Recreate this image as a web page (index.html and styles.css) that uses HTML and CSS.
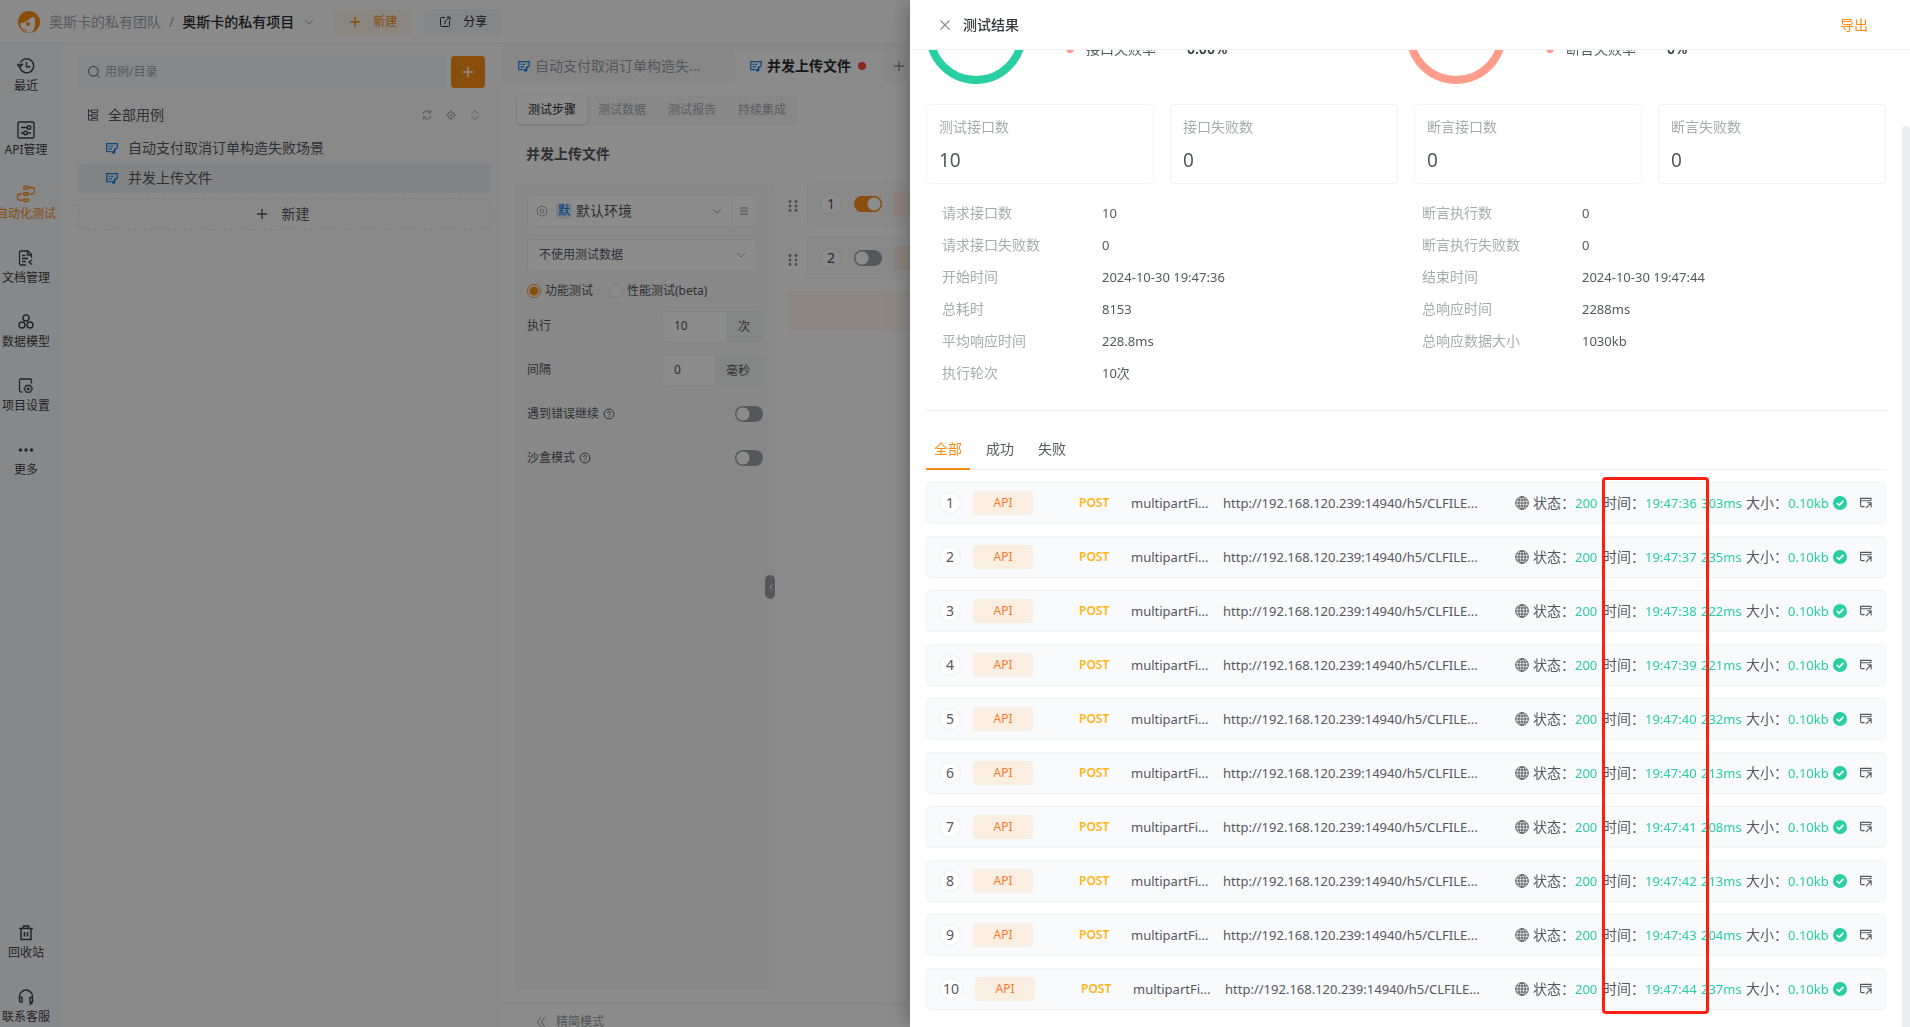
FILE: index.html
```html
<!DOCTYPE html>
<html lang="zh-CN">
<head>
<meta charset="utf-8">
<title>测试结果</title>
<link rel="stylesheet" href="styles.css">
</head>
<body>
<svg class="sprite" aria-hidden="true">
  <symbol id="i-case" viewBox="0 0 12 12"><path d="M5.500 9.600H1.200a.5.5 0 0 1-.5-.5V1.700h10.600V5" fill="none" stroke="currentColor" stroke-width="1.300"/><path d="M2.600 4.400h1.200M4.800 4.400h2.400M2.600 6.900h3.400" stroke="currentColor" stroke-width="1.200"/><path d="M11.300 5.200c0 1.300-1 1.900-2.600 1.900V10" fill="none" stroke="currentColor" stroke-width="1.500"/><circle cx="7.600" cy="10.200" r="1.600" fill="currentColor"/></symbol>
  <symbol id="i-down" viewBox="0 0 12 12"><path d="m2 4 4 4 4-4" fill="none" stroke="currentColor"/></symbol>
  <symbol id="i-plus" viewBox="0 0 12 12"><path d="M6 1v10M1 6h10" fill="none" stroke="currentColor" stroke-width="1.400"/></symbol>
  <symbol id="i-help" viewBox="0 0 12 12"><circle cx="6" cy="6" r="4.900" fill="none" stroke="currentColor"/><path d="M4.600 5a1.400 1.400 0 1 1 2 1.200c-.5.3-.6.4-.6 1M6 7.900v.9" fill="none" stroke="currentColor"/></symbol>
  <symbol id="i-globe" viewBox="0 0 14 14"><g fill="none" stroke="currentColor"><circle cx="7" cy="7" r="6.300"/><ellipse cx="7" cy="7" rx="3.200" ry="6.300"/><path d="M7 .7v12.600M.7 7h12.600M1.600 4h10.800M1.600 10h10.800"/></g></symbol>
  <symbol id="i-ok" viewBox="0 0 14 14"><circle cx="7" cy="7" r="7" fill="#28cfa2"/><path d="m3.800 7 2.400 2.400 4.200-4.500" fill="none" stroke="#fff" stroke-width="1.700"/></symbol>
  <symbol id="i-open" viewBox="0 0 12 12"><g fill="none" stroke="currentColor" stroke-width="1.100"><path d="M4.500 9.600H1.600a1 1 0 0 1-1-1V1.400h10.400v2.200M.6 3.700h10.400M6 11.200l5-5.400M7.300 5.700h3.800v4.800"/></g></symbol>
  <symbol id="i-dots" viewBox="0 0 10 12"><g fill="currentColor"><circle cx="2" cy="1.500" r="1.400"/><circle cx="8" cy="1.500" r="1.400"/><circle cx="2" cy="6" r="1.400"/><circle cx="8" cy="6" r="1.400"/><circle cx="2" cy="10.500" r="1.400"/><circle cx="8" cy="10.500" r="1.400"/></g></symbol>
</svg>

<div class="app">
  <header class="topbar">
    <svg class="logo" viewBox="0 0 22 22"><circle cx="11" cy="11" r="11" fill="#fa8c16"/><path d="M2 12.500C6.500 12 11 9 14.500 5.800c1.500 0 2.500.8 2.500 2.200 0 4 .3 8-1.500 11.500L13 21.500H7.500L3.500 18z" fill="#fff"/><circle cx="10" cy="13" r="2" fill="#fa8c16"/><path d="m3.500 16.500 3.500 5M6.500 17.500l2.500 4" stroke="#fa8c16"/></svg>
    <nav class="crumbs"><a href="#" class="muted">奥斯卡的私有团队</a><span class="muted">/</span><a href="#" class="project">奥斯卡的私有项目</a></nav>
    <svg class="icon12 muted"><use href="#i-down"/></svg>
    <div class="top-actions">
      <button class="btn btn-new"><svg class="icon12"><use href="#i-plus"/></svg>新建</button>
      <button class="btn btn-share"><svg class="icon12" viewBox="0 0 12 12"><path d="M6 1.500H2.500a1 1 0 0 0-1 1v7a1 1 0 0 0 1 1h7a1 1 0 0 0 1-1V5M6 8c0-3 1-5 4.500-6M8 1h3v3" fill="none" stroke="currentColor"/></svg>分享</button>
    </div>
  </header>

  <div class="body">
    <nav class="rail">
      <a href="#"><svg viewBox="0 0 18 18"><path d="M3.500 5.500a7 7 0 1 1-.6 5M.5 7.500h4.800L2.800 10.500zM9.500 5v4.800h4" fill="none" stroke="currentColor" stroke-width="1.400"/></svg>最近</a>
      <a href="#"><svg viewBox="0 0 18 18"><g fill="none" stroke="currentColor" stroke-width="1.400"><rect x="1" y="1" width="16" height="16" rx="1.500"/><path d="M4 6.500h6M4 12h2.500M10.500 12H14"/><circle cx="12" cy="6.500" r="1.800"/><circle cx="8.500" cy="12" r="1.800"/></g></svg>API管理</a>
      <a href="#" class="on"><svg viewBox="0 0 18 18"><g fill="none" stroke="currentColor" stroke-width="1.400"><rect x="6.500" y="1.500" width="5" height="2.600" rx="1.300"/><rect x="6.500" y="7.700" width="5" height="2.600" rx="1.300"/><rect x="6.500" y="13.900" width="5" height="2.600" rx="1.300"/><path d="M12 2.500h2.500a3 3 0 0 1 0 6.500H13M5 9H3.700a3 3 0 0 0-.7 6.200h2"/></g></svg>自动化测试</a>
      <a href="#"><svg viewBox="0 0 18 18"><g fill="none" stroke="currentColor" stroke-width="1.300"><path d="M9 16H4a1.500 1.500 0 0 1-1.500-1.500v-11A1.500 1.500 0 0 1 4 2h7l3.500 3.500V9M10.500 2v4h4M5 6.500h3.500M5 9.500h6M5 12.500h4M15 11l-3 2 3 2.500"/></g></svg>文档管理</a>
      <a href="#"><svg viewBox="0 0 18 18"><g fill="none" stroke="currentColor" stroke-width="1.400"><circle cx="9" cy="5" r="3"/><circle cx="5" cy="12" r="3"/><circle cx="13" cy="12" r="3"/></g></svg>数据模型</a>
      <a href="#"><svg viewBox="0 0 18 18"><g fill="none" stroke="currentColor" stroke-width="1.300"><path d="M5.500 15H4a1.500 1.500 0 0 1-1.500-1.500v-10A1.500 1.500 0 0 1 4 2h9.500a1 1 0 0 1 1 1v3.500"/><path d="m9.300 8.500h4l2 3.300-2 3.400h-4l-2-3.400z"/><circle cx="11.300" cy="11.900" r=".8"/></g></svg>项目设置</a>
      <a href="#"><svg viewBox="0 0 18 18"><g fill="currentColor"><circle cx="3.500" cy="9" r="1.700"/><circle cx="9" cy="9" r="1.700"/><circle cx="14.500" cy="9" r="1.700"/></g></svg>更多</a>
      <a href="#" class="push"><svg viewBox="0 0 18 18"><path d="M2 4.500h14M6.500 4V2h5v2M4 5v10.500h10V5M7.500 8v4.500M10.500 8v4.500" fill="none" stroke="currentColor" stroke-width="1.500"/></svg>回收站</a>
      <a href="#"><svg viewBox="0 0 18 18"><path d="M2.500 13V8.500a6.500 6.500 0 0 1 13 0V13c0 2-1 3-3 3.500M2.500 9.500h2.500V14H3.500a1 1 0 0 1-1-1zM15.500 9.500H13V14h2.500" fill="none" stroke="currentColor" stroke-width="1.400"/></svg>联系客服</a>
    </nav>

    <aside class="cases">
      <div class="search-row">
        <label class="search"><svg viewBox="0 0 12 12"><circle cx="5.300" cy="5.300" r="4.800" fill="none" stroke="currentColor"/><path d="m8.600 8.600 3 3" stroke="currentColor"/></svg><input type="text" placeholder="用例/目录" aria-label="用例/目录"></label>
        <button class="add" aria-label="新建"><svg class="icon12"><use href="#i-plus"/></svg></button>
      </div>
      <div class="tree-head">
        <svg class="icon12" viewBox="0 0 12 12"><path d="M1.500 0v11h3M1.500 2h3M1.500 6.500h3M4.500 1h6v2.500h-6zM4.500 5.300h6v2.500h-6zM4.500 9.500h6V12h-6z" fill="none" stroke="currentColor"/></svg>
        <span class="grow">全部用例</span>
        <svg class="icon10" viewBox="0 0 10 10"><path d="M1 4a4 4 0 0 1 7.500-1V.5M9 6a4 4 0 0 1-7.500 1v2.500M8.500 3H6M1.500 7H4" fill="none" stroke="currentColor"/></svg>
        <svg class="icon10" viewBox="0 0 10 10"><path d="M5 0v2M5 8v2M0 5h2M8 5h2" stroke="currentColor"/><circle cx="5" cy="5" r="3.200" fill="none" stroke="currentColor"/><circle cx="5" cy="5" r="1" fill="currentColor"/></svg>
        <svg class="icon10" viewBox="0 0 10 10"><path d="m2 3.500 3-3 3 3M2 6.500l3 3 3-3" fill="none" stroke="currentColor"/></svg>
      </div>
      <a href="#" class="leaf"><svg class="icon12"><use href="#i-case"/></svg>自动支付取消订单构造失败场景</a>
      <a href="#" class="leaf selected"><svg class="icon12"><use href="#i-case"/></svg>并发上传文件</a>
      <button class="new-case"><svg class="icon12"><use href="#i-plus"/></svg>新建</button>
    </aside>

    <main class="main">
      <div class="tabs">
        <a href="#" class="tab"><svg class="icon12 blue"><use href="#i-case"/></svg>自动支付取消订单构造失...</a>
        <a href="#" class="tab current"><svg class="icon12 blue"><use href="#i-case"/></svg>并发上传文件<i class="dirty"></i></a>
        <button class="tab-add" aria-label="新标签"><svg class="icon12"><use href="#i-plus"/></svg></button>
      </div>
      <div class="page">
        <div class="segments"><button class="on">测试步骤</button><button>测试数据</button><button>测试报告</button><button>持续集成</button></div>
        <h1>并发上传文件</h1>
        <div class="work">
          <section class="config">
            <div class="field env">
              <svg class="icon12 muted" viewBox="0 0 12 12"><path d="m6 .7 4.600 2.600v5.400L6 11.300 1.400 8.700V3.300z" fill="none" stroke="currentColor"/><circle cx="6" cy="6" r="1.800" fill="none" stroke="currentColor"/></svg>
              <b>默</b><span class="grow">默认环境</span>
              <svg class="icon12 muted"><use href="#i-down"/></svg>
              <button aria-label="环境管理"><svg class="icon12" viewBox="0 0 12 12"><path d="M2 3h8M2 6h8M2 9h8" stroke="currentColor"/></svg></button>
            </div>
            <div class="field"><select aria-label="测试数据"><option>不使用测试数据</option></select><svg class="icon12 muted caret"><use href="#i-down"/></svg></div>
            <div class="radios">
              <label><input type="radio" name="kind" checked>功能测试</label>
              <label><input type="radio" name="kind">性能测试(beta)</label>
            </div>
            <div class="line"><label for="times">执行</label><span class="num"><input id="times" type="text" value="10"><em>次</em></span></div>
            <div class="line"><label for="gap">间隔</label><span class="num"><input id="gap" type="text" value="0"><em>毫秒</em></span></div>
            <div class="line"><label for="cont">遇到错误继续</label><svg class="icon12"><use href="#i-help"/></svg><input id="cont" type="checkbox" class="switch"></div>
            <div class="line"><label for="box">沙盒模式</label><svg class="icon12"><use href="#i-help"/></svg><input id="box" type="checkbox" class="switch"></div>
            <button class="fold" aria-label="收起"><svg viewBox="0 0 8 8"><path d="M5.500 1.500 3 4l2.500 2.500" fill="none" stroke="#fff"/></svg></button>
          </section>
          <section class="steps">
            <div class="step"><svg><use href="#i-dots"/></svg><div class="step-card"><span class="badge">1</span><input type="checkbox" class="switch" aria-label="启用步骤 1" checked><span class="step-tag"></span></div></div>
            <div class="step"><svg><use href="#i-dots"/></svg><div class="step-card"><span class="badge">2</span><input type="checkbox" class="switch" aria-label="启用步骤 2"><span class="step-tag"></span></div></div>
            <div class="step-add"></div>
          </section>
        </div>
      </div>
      <footer class="foot"><svg class="icon12" viewBox="0 0 12 12"><path d="M6 1 2.500 6 6 11M10 1 6.500 6l3.500 5" fill="none" stroke="currentColor"/></svg>精简模式</footer>
    </main>
  </div>
</div>

<div class="mask"></div>

<section class="drawer" role="dialog" aria-labelledby="drawer-title">
  <header class="drawer-head">
    <button class="close" aria-label="关闭"><svg class="icon12" viewBox="0 0 12 12"><path d="m1.500 1.500 9 9M10.500 1.500l-9 9" stroke="currentColor" stroke-width="1.200"/></svg></button>
    <h2 id="drawer-title">测试结果</h2>
    <a href="#" class="export">导出</a>
  </header>
  <div class="drawer-body">
    <div class="rates">
      <div class="rate"><svg class="ring" viewBox="0 0 100 100"><circle cx="50" cy="50" r="46" fill="none" stroke="#28cfa2" stroke-width="8"/></svg><p><i></i><span>接口失败率</span><strong>0.00%</strong></p></div>
      <div class="rate"><svg class="ring" viewBox="0 0 100 100"><circle cx="50" cy="50" r="46" fill="none" stroke="#ff9c8c" stroke-width="8"/></svg><p><i></i><span>断言失败率</span><strong>0%</strong></p></div>
    </div>
    <div class="cards">
      <div class="card"><span>测试接口数</span><b>10</b></div>
      <div class="card"><span>接口失败数</span><b>0</b></div>
      <div class="card"><span>断言接口数</span><b>0</b></div>
      <div class="card"><span>断言失败数</span><b>0</b></div>
    </div>
    <dl class="facts">
      <dt>请求接口数</dt><dd>10</dd><dt>断言执行数</dt><dd>0</dd>
      <dt>请求接口失败数</dt><dd>0</dd><dt>断言执行失败数</dt><dd>0</dd>
      <dt>开始时间</dt><dd>2024-10-30 19:47:36</dd><dt>结束时间</dt><dd>2024-10-30 19:47:44</dd>
      <dt>总耗时</dt><dd>8153</dd><dt>总响应时间</dt><dd>2288ms</dd>
      <dt>平均响应时间</dt><dd>228.8ms</dd><dt>总响应数据大小</dt><dd>1030kb</dd>
      <dt>执行轮次</dt><dd>10次</dd>
    </dl>
    <nav class="filters"><a href="#" class="on">全部</a><a href="#">成功</a><a href="#">失败</a></nav>
    <div class="results">
      <div class="row"><span class="badge">1</span><span class="api">API</span><span class="verb">POST</span><span class="name">multipartFi...</span><span class="url">http://192.168.120.239:14940/h5/CLFILE...</span><svg class="icon14"><use href="#i-globe"/></svg><span class="lab">状态：</span><span class="code">200</span><span class="lab">时间：</span><span class="time">19:47:36</span><span class="ms">303ms</span><span class="lab">大小：</span><span class="size">0.10kb</span><svg class="icon14"><use href="#i-ok"/></svg><button class="open" aria-label="详情"><svg class="icon12"><use href="#i-open"/></svg></button></div>
      <div class="row"><span class="badge">2</span><span class="api">API</span><span class="verb">POST</span><span class="name">multipartFi...</span><span class="url">http://192.168.120.239:14940/h5/CLFILE...</span><svg class="icon14"><use href="#i-globe"/></svg><span class="lab">状态：</span><span class="code">200</span><span class="lab">时间：</span><span class="time">19:47:37</span><span class="ms">235ms</span><span class="lab">大小：</span><span class="size">0.10kb</span><svg class="icon14"><use href="#i-ok"/></svg><button class="open" aria-label="详情"><svg class="icon12"><use href="#i-open"/></svg></button></div>
      <div class="row"><span class="badge">3</span><span class="api">API</span><span class="verb">POST</span><span class="name">multipartFi...</span><span class="url">http://192.168.120.239:14940/h5/CLFILE...</span><svg class="icon14"><use href="#i-globe"/></svg><span class="lab">状态：</span><span class="code">200</span><span class="lab">时间：</span><span class="time">19:47:38</span><span class="ms">222ms</span><span class="lab">大小：</span><span class="size">0.10kb</span><svg class="icon14"><use href="#i-ok"/></svg><button class="open" aria-label="详情"><svg class="icon12"><use href="#i-open"/></svg></button></div>
      <div class="row"><span class="badge">4</span><span class="api">API</span><span class="verb">POST</span><span class="name">multipartFi...</span><span class="url">http://192.168.120.239:14940/h5/CLFILE...</span><svg class="icon14"><use href="#i-globe"/></svg><span class="lab">状态：</span><span class="code">200</span><span class="lab">时间：</span><span class="time">19:47:39</span><span class="ms">221ms</span><span class="lab">大小：</span><span class="size">0.10kb</span><svg class="icon14"><use href="#i-ok"/></svg><button class="open" aria-label="详情"><svg class="icon12"><use href="#i-open"/></svg></button></div>
      <div class="row"><span class="badge">5</span><span class="api">API</span><span class="verb">POST</span><span class="name">multipartFi...</span><span class="url">http://192.168.120.239:14940/h5/CLFILE...</span><svg class="icon14"><use href="#i-globe"/></svg><span class="lab">状态：</span><span class="code">200</span><span class="lab">时间：</span><span class="time">19:47:40</span><span class="ms">232ms</span><span class="lab">大小：</span><span class="size">0.10kb</span><svg class="icon14"><use href="#i-ok"/></svg><button class="open" aria-label="详情"><svg class="icon12"><use href="#i-open"/></svg></button></div>
      <div class="row"><span class="badge">6</span><span class="api">API</span><span class="verb">POST</span><span class="name">multipartFi...</span><span class="url">http://192.168.120.239:14940/h5/CLFILE...</span><svg class="icon14"><use href="#i-globe"/></svg><span class="lab">状态：</span><span class="code">200</span><span class="lab">时间：</span><span class="time">19:47:40</span><span class="ms">213ms</span><span class="lab">大小：</span><span class="size">0.10kb</span><svg class="icon14"><use href="#i-ok"/></svg><button class="open" aria-label="详情"><svg class="icon12"><use href="#i-open"/></svg></button></div>
      <div class="row"><span class="badge">7</span><span class="api">API</span><span class="verb">POST</span><span class="name">multipartFi...</span><span class="url">http://192.168.120.239:14940/h5/CLFILE...</span><svg class="icon14"><use href="#i-globe"/></svg><span class="lab">状态：</span><span class="code">200</span><span class="lab">时间：</span><span class="time">19:47:41</span><span class="ms">208ms</span><span class="lab">大小：</span><span class="size">0.10kb</span><svg class="icon14"><use href="#i-ok"/></svg><button class="open" aria-label="详情"><svg class="icon12"><use href="#i-open"/></svg></button></div>
      <div class="row"><span class="badge">8</span><span class="api">API</span><span class="verb">POST</span><span class="name">multipartFi...</span><span class="url">http://192.168.120.239:14940/h5/CLFILE...</span><svg class="icon14"><use href="#i-globe"/></svg><span class="lab">状态：</span><span class="code">200</span><span class="lab">时间：</span><span class="time">19:47:42</span><span class="ms">213ms</span><span class="lab">大小：</span><span class="size">0.10kb</span><svg class="icon14"><use href="#i-ok"/></svg><button class="open" aria-label="详情"><svg class="icon12"><use href="#i-open"/></svg></button></div>
      <div class="row"><span class="badge">9</span><span class="api">API</span><span class="verb">POST</span><span class="name">multipartFi...</span><span class="url">http://192.168.120.239:14940/h5/CLFILE...</span><svg class="icon14"><use href="#i-globe"/></svg><span class="lab">状态：</span><span class="code">200</span><span class="lab">时间：</span><span class="time">19:47:43</span><span class="ms">204ms</span><span class="lab">大小：</span><span class="size">0.10kb</span><svg class="icon14"><use href="#i-ok"/></svg><button class="open" aria-label="详情"><svg class="icon12"><use href="#i-open"/></svg></button></div>
      <div class="row"><span class="badge">10</span><span class="api">API</span><span class="verb">POST</span><span class="name">multipartFi...</span><span class="url">http://192.168.120.239:14940/h5/CLFILE...</span><svg class="icon14"><use href="#i-globe"/></svg><span class="lab">状态：</span><span class="code">200</span><span class="lab">时间：</span><span class="time">19:47:44</span><span class="ms">237ms</span><span class="lab">大小：</span><span class="size">0.10kb</span><svg class="icon14"><use href="#i-ok"/></svg><button class="open" aria-label="详情"><svg class="icon12"><use href="#i-open"/></svg></button></div>
      <div class="highlight"></div>
    </div>
  </div>
  <div class="thumb"></div>
</section>
</body>
</html>
```
FILE: styles.css
```css
* { box-sizing: border-box; }
body {
  margin: 0;
  height: 100vh;
  overflow: hidden;
  font: 14px/22px "Noto Sans", "Noto Sans CJK SC", sans-serif;
  color: #55585d;
}
a { color: inherit; text-decoration: none; }
button, input, select { font: inherit; color: inherit; border: 0; padding: 0; margin: 0; background: none; }
h1, h2, p, dl, dd { margin: 0; }
svg { flex: none; }
.sprite { position: absolute; width: 0; height: 0; }
.icon10 { width: 10px; height: 10px; }
.icon12 { width: 12px; height: 12px; }
.icon14 { width: 14px; height: 14px; }
.grow { flex: 1; }
.muted { color: #a2a5a9; }
.blue { color: #1c84e8; }

/* application shell */
.app { height: 100vh; display: flex; flex-direction: column; background: #fff; }
.topbar { height: 44px; flex: none; display: flex; align-items: center; padding: 0 18px; border-bottom: 1px solid #eeeff1; background: #fcfcfc; }
.logo { width: 22px; height: 22px; margin-right: 9px; }
.crumbs { display: flex; gap: 8px; margin-right: 9px; }
.project { color: #2a2c30; font-weight: 500; }
.top-actions { display: flex; gap: 12px; margin-left: 19px; }
.btn { width: 78px; height: 26px; display: flex; align-items: center; justify-content: center; gap: 12px; border-radius: 4px; font-size: 12px; }
.btn-new { background: #fbf4ea; color: #fa8c16; }
.btn-share { background: #f2f4f7; color: #2a2c30; }
.body { flex: 1; min-height: 0; display: flex; }

.rail { width: 62px; flex: none; display: flex; flex-direction: column; padding-right: 10px; background: #f5f7fa; }
.rail a { height: 64px; flex: none; display: flex; flex-direction: column; align-items: center; padding-top: 13px; font-size: 12px; white-space: nowrap; color: #3f4246; }
.rail a.on { margin: 0 -10px; color: #fa8c16; }
.rail svg { width: 18px; height: 18px; }
.rail .push { margin-top: auto; }
.rail a:last-child { margin-bottom: -12px; }

.cases { width: 441px; flex: none; padding: 12px 12px 0 16px; background: #fafafa; }
.search-row { display: flex; gap: 4px; padding-right: 6px; }
.search { flex: 1; height: 32px; display: flex; align-items: center; gap: 5px; padding: 0 10px; border-radius: 4px; background: #f5f6f8; font-size: 12px; }
.search svg { width: 12px; height: 12px; }
.search input { flex: 1; outline: 0; }
.search input::placeholder { color: #a0a3a8; }
.add { width: 34px; height: 32px; border-radius: 4px; background: #fa8c16; color: #fff; display: grid; place-items: center; }
.tree-head { height: 45px; display: flex; align-items: center; gap: 14px; padding: 9px 11px 0 9px; }
.tree-head .icon12 { margin-right: -5px; }
.tree-head .icon10 { color: #9a9da1; }
.leaf { display: flex; align-items: center; gap: 10px; height: 30px; padding-left: 28px; border-radius: 4px; }
.leaf svg { color: #1c84e8; }
.selected { background: #eceef2; }
.new-case { width: 100%; height: 32px; margin-top: 5px; display: flex; align-items: center; justify-content: center; gap: 14px; padding-right: 4px; border: 1px dashed #e6e7ea; border-radius: 4px; }

.main { flex: 1; min-width: 0; display: flex; flex-direction: column; background: #fdfdfd; }
.tabs { height: 38px; flex: none; display: flex; align-items: flex-end; padding-top: 6px; background: #f6f6f7; }
.tab { width: 232px; height: 32px; display: flex; align-items: center; gap: 5px; padding-left: 15px; color: #9a9da1; }
.tab.current { width: 148px; background: #fdfdfd; color: #2a2c30; font-weight: 600; border-radius: 4px 4px 0 0; }
.dirty { width: 8px; height: 8px; margin-left: 2px; border-radius: 50%; background: #fb4b3c; }
.tab-add { height: 32px; padding: 0 10px; display: grid; place-items: center; color: #8a8d91; }
.page { flex: 1; min-height: 0; display: flex; flex-direction: column; padding: 13px 12px; }
.segments { align-self: flex-start; height: 30px; display: flex; margin-left: 1px; padding: 1px; border-radius: 4px; background: #f7f7f8; }
.segments button { width: 70px; font-size: 12px; border-radius: 4px; color: #a8abaf; }
.segments .on { background: #fff; color: #2a2c30; box-shadow: 0 1px 3px rgba(0, 0, 0, .15); }
.page h1 { margin: 18px 11px; font-size: 14px; line-height: 22px; font-weight: 600; }
.work { flex: 1; min-height: 0; display: flex; gap: 12px; }
.config { position: relative; width: 260px; flex: none; padding: 12px; border-radius: 4px; background: #f8f8f9; font-size: 12px; }
.field { position: relative; width: 230px; height: 32px; margin-bottom: 12px; display: flex; align-items: center; border: 1px solid #f0f1f3; border-radius: 4px; background: #fff; }
.env { padding-left: 8px; gap: 8px; font-size: 14px; }
.env b { padding: 0 2px; margin-right: -4px; line-height: 16px; border-radius: 3px; background: #e2ecf8; color: #1c84e8; font-size: 12px; font-weight: 500; }
.env button { width: 25px; height: 30px; border-left: 1px solid #f0f1f3; display: grid; place-items: center; color: #8a8d91; }
.field select { width: 100%; height: 30px; padding: 0 11px; appearance: none; }
.caret { position: absolute; right: 9px; pointer-events: none; }
.radios { display: flex; gap: 16px; margin: -3px 0 8px; }
.radios label { display: flex; align-items: center; gap: 4px; }
.radios input { appearance: none; width: 14px; height: 14px; border: 1px solid #e0e1e4; border-radius: 50%; background: #fafafa; }
.radios input:checked { border-color: #fa8c16; background: radial-gradient(#fa8c16 4px, #fff 5px); }
.line { width: 236px; height: 32px; margin-bottom: 12px; display: flex; align-items: center; gap: 4px; }
.num { width: 101px; height: 31px; margin-left: auto; display: flex; border: 1px solid #f0f1f3; border-radius: 4px; background: #fff; }
.num input { flex: 1; min-width: 0; padding: 0 11px; }
.num em { padding: 4px 12px; font-style: normal; background: #f0f4f4; }
.switch { appearance: none; width: 28px; height: 16px; margin-left: auto; border-radius: 8px; background: radial-gradient(circle at 8px 8px, #fff 6px, transparent 7px) #9b9fa3; }
.switch:checked { background: radial-gradient(circle at 20px 8px, #fff 6px, transparent 7px) #fa8c16; }
.fold { position: absolute; right: 0; top: 392px; width: 10px; height: 24px; border-radius: 5px; background: #9b9fa3; }
.fold svg { display: block; width: 8px; height: 8px; margin-left: 2px; }
.steps { flex: 1; min-width: 0; }
.step { display: flex; align-items: center; gap: 9px; height: 42px; margin-bottom: 12px; padding-left: 1px; color: #8a8d91; }
.step > svg { width: 10px; height: 12px; margin-top: 4px; }
.step-card { flex: 1; height: 42px; display: flex; align-items: center; padding-left: 13px; border: 1px solid #f1f2f4; border-radius: 4px; background: #f9f9fa; color: #4c4f54; }
.step-card .switch { margin: 0 12px 0 13px; }
.step-tag { width: 60px; height: 24px; border-radius: 4px; background: #f9ece1; }
.step-add { height: 40px; border-radius: 4px; background: #fdf5ec; }
.foot { height: 24px; flex: none; display: flex; align-items: center; gap: 9px; padding: 12px 32px 0; border-top: 1px solid #eeeff1; font-size: 12px; color: #9a9da1; }

.mask { position: fixed; inset: 0; background: rgba(0, 0, 0, .45); }

/* result drawer */
.drawer { position: fixed; top: 0; right: 0; bottom: 0; width: 1000px; max-width: 100%; display: flex; flex-direction: column; background: #fff; box-shadow: -6px 0 16px -4px rgba(0, 0, 0, .22), -9px 0 28px rgba(0, 0, 0, .06); }
.drawer-head { height: 50px; flex: none; display: flex; align-items: center; padding: 0 42px 0 29px; border-bottom: 1px solid #f0f1f2; }
.close { width: 12px; height: 12px; margin-right: 12px; color: #8f9297; }
.close svg { display: block; }
.drawer-head h2 { font-size: 14px; line-height: 22px; font-weight: 500; color: #33363b; }
.export { margin-left: auto; color: #fa8c16; }
.drawer-body { flex: 1; min-height: 0; overflow: hidden; padding: 0 24px 0 16px; }
.rates { height: 34px; display: grid; grid-template-columns: 1fr 1fr; align-content: end; overflow: hidden; }
.rate { display: flex; align-items: flex-end; }
.ring { width: 100px; height: 100px; }
.rate p { display: flex; align-items: center; height: 20px; margin: 0 0 25px 40px; }
.rate i { width: 8px; height: 8px; margin-right: 12px; border-radius: 50%; background: #ff9c8c; }
.rate span { width: 101px; }
.rate strong { font-size: 14px; font-weight: 600; color: #33363b; }
.cards { display: grid; grid-template-columns: repeat(4, 1fr); gap: 16px; margin-top: 20px; }
.card { height: 80px; display: flex; flex-direction: column; gap: 10px; padding: 11px 12px; border: 1px solid #f2f3f4; border-radius: 4px; }
.card span { color: #a8abaf; }
.card b { font-size: 19px; line-height: 24px; font-weight: 400; }
.facts { display: grid; grid-template-columns: 160px 320px 160px 1fr; margin: 13px 0 0; padding: 0 0 21px 16px; border-bottom: 1px solid #eceff2; line-height: 32px; }
.facts dt { color: #a8abaf; }
.facts dd { font-size: 13px; }
.filters { display: flex; gap: 8px; margin-top: 17px; border-bottom: 1px solid #f0f1f3; }
.filters a { padding: 10px 8px; height: 42px; margin-bottom: -1px; border-bottom: 2px solid transparent; }
.filters .on { color: #fa8c16; border-color: #fa8c16; }
.results { position: relative; display: flex; flex-direction: column; gap: 12px; padding-top: 12px; }
.row { height: 42px; display: flex; align-items: center; padding: 0 13px; border: 1px solid #f1f3f5; border-radius: 4px; background: #f9fafc; font-size: 13px; white-space: nowrap; }
.badge { min-width: 20px; height: 20px; padding: 0 3px; border-radius: 10px; background: #fff; box-shadow: 0 0 2px rgba(0, 0, 0, .12); text-align: center; font-size: 14px; line-height: 20px; flex: none; }
.api { width: 60px; flex: none; margin-left: 13px; border-radius: 4px; background: #faeee3; color: #fa7a2c; text-align: center; font-size: 12px; line-height: 24px; }
.verb { width: 52px; margin-left: 46px; color: #fdb515; font-weight: 600; font-size: 12px; }
.name { width: 92px; }
.url { flex: 1; }
.row .lab { width: 42px; margin-left: 4px; font-size: 14px; }
.code, .time, .ms, .size { color: #28cfa2; }
.code { width: 24px; }
.time { width: 56px; }
.ms { width: 41px; }
.size { width: 45px; }
.open { width: 12px; height: 12px; margin-left: 13px; }
.open svg { display: block; }
.highlight { position: absolute; left: 676px; right: 177px; top: 7px; bottom: -4px; border: 3px solid #fb2012; border-radius: 4px; pointer-events: none; }
.thumb { position: absolute; right: 0; top: 126px; bottom: 0; width: 8px; border-radius: 4px 4px 0 0; background: #ebeef1; }
```
